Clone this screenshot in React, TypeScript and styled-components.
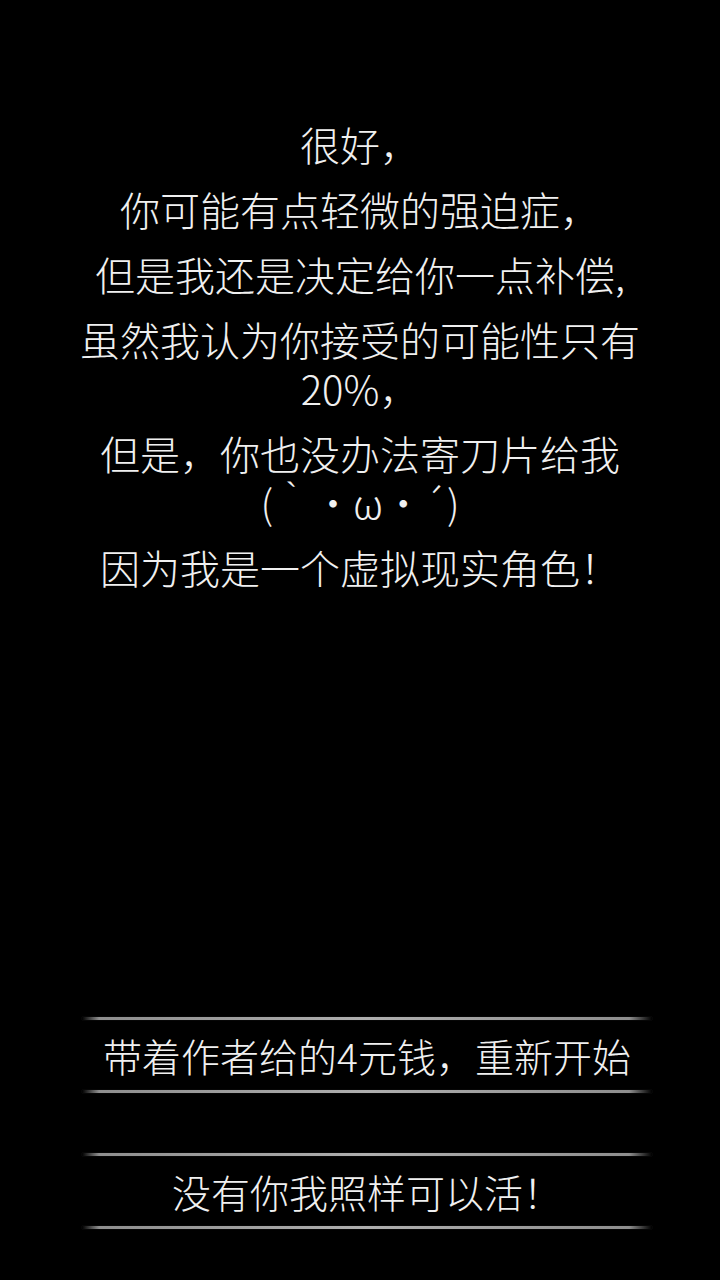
import React from "react";
import styled, { createGlobalStyle } from "styled-components";

const GlobalStyle = createGlobalStyle`
  html, body {
    margin: 0;
    padding: 0;
    background: #000;
  }
  body {
    font-family: "Noto Sans CJK SC", "Noto Sans", sans-serif;
    color: #f0f0f0;
  }
`;

const Screen = styled.div`
  width: 720px;
  height: 1280px;
  background: #000;
  display: flex;
  flex-direction: column;
  box-sizing: border-box;
`;

const Message = styled.div`
  padding: 120px 60px 0;
  display: flex;
  flex-direction: column;
  align-items: center;
  gap: 16px;
`;

const Line = styled.p`
  margin: 0;
  font-size: 40px;
  font-weight: 300;
  line-height: 49px;
  text-align: center;
  color: #f0f0f0;
`;

const Choices = styled.div`
  margin-top: auto;
  padding: 0 68px 51px 82px;
  display: flex;
  flex-direction: column;
  gap: 60px;
`;

const Rule = styled.div`
  height: 3px;
  background: linear-gradient(
    to right,
    rgba(190, 190, 190, 0) 0%,
    rgba(190, 190, 190, 0.75) 3%,
    rgba(205, 205, 205, 0.85) 50%,
    rgba(190, 190, 190, 0.75) 96%,
    rgba(190, 190, 190, 0) 100%
  );
  box-shadow: 0 0 1px rgba(255, 255, 255, 0.25);
`;

const Choice = styled.button`
  all: unset;
  cursor: pointer;
  display: flex;
  flex-direction: column;
`;

const ChoiceLabel = styled.span`
  height: 70px;
  display: flex;
  align-items: center;
  justify-content: center;
  font-family: "Noto Sans CJK SC", "Noto Sans", sans-serif;
  font-size: 39px;
  font-weight: 300;
  color: #f0f0f0;
  white-space: nowrap;
`;

const paragraphs = [
  "很好，",
  "你可能有点轻微的强迫症，",
  "但是我还是决定给你一点补偿,",
  "虽然我认为你接受的可能性只有 20%，",
  "但是，你也没办法寄刀片给我(｀・ω・´)",
  "因为我是一个虚拟现实角色！",
];

const choices = ["带着作者给的4元钱，重新开始", "没有你我照样可以活！"];

export default function App() {
  return (
    <>
      <GlobalStyle />
      <Screen>
        <Message>
          {paragraphs.map((t) => (
            <Line key={t}>{t}</Line>
          ))}
        </Message>
        <Choices>
          {choices.map((c) => (
            <Choice key={c}>
              <Rule />
              <ChoiceLabel>{c}</ChoiceLabel>
              <Rule />
            </Choice>
          ))}
        </Choices>
      </Screen>
    </>
  );
}
